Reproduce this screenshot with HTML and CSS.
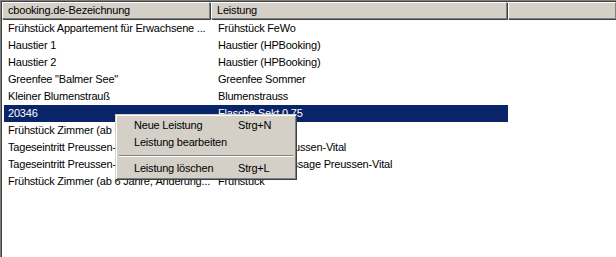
FILE: index.html
```html
<!DOCTYPE html>
<html lang="de">
<head>
    <meta charset="UTF-8">
    <title>Leistungen</title>
    <link rel="stylesheet" href="styles.css">
</head>
<body>
    <div class="list">
        <div class="header">
            <div class="hcol col-name">cbooking.de-Bezeichnung</div>
            <div class="hcol col-service">Leistung</div>
            <div class="hcol col-rest"></div>
        </div>
        <div class="rows">
            <div class="row"><span class="col-name">Frühstück Appartement für Erwachsene ...</span><span class="col-service">Frühstück FeWo</span></div>
            <div class="row"><span class="col-name">Haustier 1</span><span class="col-service">Haustier (HPBooking)</span></div>
            <div class="row"><span class="col-name">Haustier 2</span><span class="col-service">Haustier (HPBooking)</span></div>
            <div class="row"><span class="col-name">Greenfee "Balmer See"</span><span class="col-service">Greenfee Sommer</span></div>
            <div class="row"><span class="col-name">Kleiner Blumenstrauß</span><span class="col-service">Blumenstrauss</span></div>
            <div class="row selected"><span class="col-name">20346</span><span class="col-service">Flasche Sekt 0,75</span></div>
            <div class="row"><span class="col-name">Frühstück Zimmer (ab 6 Jahre)</span><span class="col-service">Frühstück</span></div>
            <div class="row"><span class="col-name">Tageseintritt Preussen-Vital</span><span class="col-service">Tageseintritt Preussen-Vital</span></div>
            <div class="row"><span class="col-name">Tageseintritt Preussen-Vital Massage</span><span class="col-service">Tageseintritt Massage Preussen-Vital</span></div>
            <div class="row"><span class="col-name">Frühstück Zimmer (ab 6 Jahre, Änderung...</span><span class="col-service">Frühstück</span></div>
        </div>

        <!-- context menu over the selected row -->
        <div class="menu">
            <div class="item"><span class="label">Neue Leistung</span><span class="key">Strg+N</span></div>
            <div class="item"><span class="label">Leistung bearbeiten</span><span class="key"></span></div>
            <div class="sep"></div>
            <div class="item"><span class="label">Leistung löschen</span><span class="key">Strg+L</span></div>
        </div>
    </div>
</body>
</html>
```

FILE: styles.css
```css
body {
    margin: 0;
    background-color: #fff;
    font-family: "Liberation Sans", Arial, sans-serif;
    font-size: 11px;
    letter-spacing: -0.2px;
    color: #000;
}
.list {
    position: relative;
    height: 257px;
    border-top: 1px solid #808080;
    border-left: 1px solid #808080;
    box-sizing: border-box;
    overflow: hidden;
}
.header {
    display: flex;
    height: 17px;
    border-top: 1px solid #404040;
    border-left: 1px solid #404040;
}
.hcol {
    box-sizing: border-box;
    height: 17px;
    padding-left: 5px;
    line-height: 15px;
    background-color: #d4d0c8;
    border-top: 1px solid #fff;
    border-left: 1px solid #fff;
    border-right: 1px solid #808080;
    border-bottom: 1px solid #808080;
    box-shadow: 1px 1px 0 #404040;
    white-space: nowrap;
}
.header .col-name { width: 208px; margin-right: 1px; }
.header .col-service { width: 296px; margin-right: 1px; }
.header .col-rest { width: 108px; }
.rows {
    padding-top: 1px;
    border-left: 1px solid #404040;
    height: 240px;
}
.row {
    display: flex;
    height: 17px;
    line-height: 17px;
    margin-left: 2px;
    width: 504px;
    white-space: nowrap;
}
.row .col-name {
    width: 205px;
    padding-left: 4px;
    overflow: hidden;
}
.row .col-service {
    padding-left: 5px;
}
.row.selected {
    background-color: #0a246a;
    color: #fff;
}
.menu {
    position: absolute;
    left: 114px;
    top: 113px;
    width: 182px;
    box-sizing: border-box;
    padding: 2px;
    background-color: #d4d0c8;
    border-top: 1px solid #d4d0c8;
    border-left: 1px solid #d4d0c8;
    border-right: 1px solid #404040;
    border-bottom: 1px solid #404040;
    box-shadow: inset 1px 1px 0 #fff, inset -1px -1px 0 #808080;
}
.item {
    display: flex;
    height: 17px;
    line-height: 17px;
    padding-left: 16px;
}
.item .label { width: 104px; }
.sep {
    height: 9px;
    margin: 0 1px;
    background: linear-gradient(#d4d0c8 4px, #808080 4px, #808080 5px, #fff 5px, #fff 6px, #d4d0c8 6px);
}
```
